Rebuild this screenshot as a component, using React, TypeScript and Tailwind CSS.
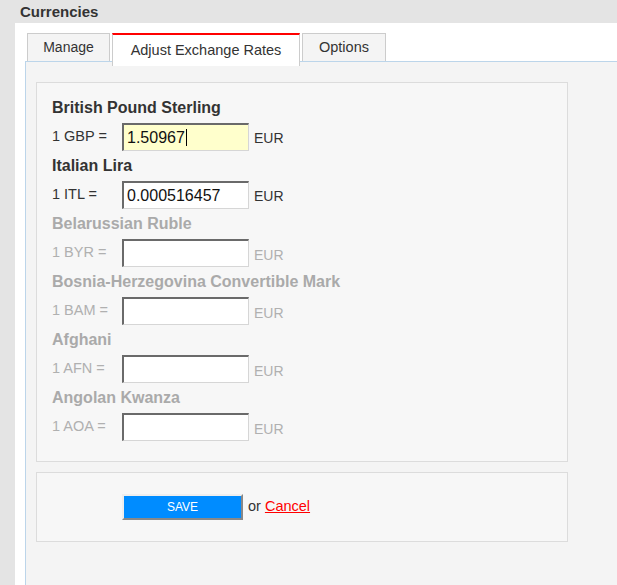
import React from "react";

type Cur = { name: string; code: string; value: string; active: boolean; focused?: boolean };

const currencies: Cur[] = [
  { name: "British Pound Sterling", code: "GBP", value: "1.50967", active: true, focused: true },
  { name: "Italian Lira", code: "ITL", value: "0.000516457", active: true },
  { name: "Belarussian Ruble", code: "BYR", value: "", active: false },
  { name: "Bosnia-Herzegovina Convertible Mark", code: "BAM", value: "", active: false },
  { name: "Afghani", code: "AFN", value: "", active: false },
  { name: "Angolan Kwanza", code: "AOA", value: "", active: false },
];

function CurrencyBlock({ c, last }: { c: Cur; last: boolean }) {
  return (
    <div className={last ? "" : "mb-[4px]"}>
      <div
        className={`h-[20px] leading-[22px] text-[16px] font-bold ${
          c.active ? "text-[#333333]" : "text-[#aaaaaa]"
        }`}
      >
        {c.name}
      </div>
      <div className="mt-[6px] h-[28px] flex items-center">
        <div
          className={`w-[70px] text-[14.5px] ${c.active ? "text-[#333333]" : "text-[#b0b0b0]"}`}
        >
          1 {c.code} =
        </div>
        <div
          className={`w-[127px] h-[28px] border-t-2 border-l-2 border-t-[#6a6a6a] border-l-[#6a6a6a] border-b border-r border-b-[#d6d6d6] border-r-[#d6d6d6] ${
            c.focused ? "bg-[#ffffcc]" : "bg-white"
          } flex items-center pl-[3px] text-[16px] text-[#111111]`}
        >
          <span>{c.value}</span>
          {c.focused && <span className="inline-block w-[1px] h-[17px] bg-black ml-[1px]" />}
        </div>
        <div
          className={`ml-[5px] text-[14px] ${
            c.active ? "text-[#333333] mt-[2px]" : "text-[#b0b0b0] mt-[4px]"
          }`}
        >
          EUR
        </div>
      </div>
    </div>
  );
}

export default function App() {
  return (
    <div
      className="w-full h-[585px] overflow-hidden bg-[#e4e4e4] flex flex-col"
      style={{ fontFamily: '"Liberation Sans", Arial, sans-serif' }}
    >
      <div className="h-[23px] pl-[20px] leading-[23px] text-[15px] font-bold text-[#333333] shrink-0">
        Currencies
      </div>
      <div className="ml-[15px] flex-1 bg-white pt-[10px] flex flex-col">
        <div className="flex items-start pl-[12px] h-[28px] shrink-0">
          <div className="w-[83px] h-[28px] border border-b-0 border-[#cccccc] bg-[#f4f4f4] flex items-center justify-center text-[14px] text-[#333333]">
            Manage
          </div>
          <div className="ml-[2px] w-[188px] h-[33px] border-x border-[#cccccc] border-t-2 border-t-[#ff0000] bg-white relative z-10 flex items-center justify-center pt-[1px] text-[14.5px] text-[#333333]">
            Adjust Exchange Rates
          </div>
          <div className="ml-[2px] w-[84px] h-[28px] border border-b-0 border-[#cccccc] bg-[#f4f4f4] flex items-center justify-center text-[14.5px] text-[#333333]">
            Options
          </div>
        </div>
        <div className="ml-[10px] flex-1 border-l border-t border-[#bcd5ea] bg-[#f4f4f4] pl-[10px] pt-[20px]">
          <div className="w-[532px] border border-[#dcdcdc] bg-[#f7f7f7] pl-[15px] pt-[14px] pb-[20px]">
            {currencies.map((c, i) => (
              <CurrencyBlock key={c.code} c={c} last={i === currencies.length - 1} />
            ))}
          </div>
          <div className="mt-[10px] w-[532px] h-[70px] border border-[#dcdcdc] bg-[#f7f7f7] flex items-center pl-[85px]">
            <button className="w-[121px] h-[26px] bg-[#008cff] border-2 border-t-[#eeeeee] border-l-[#eeeeee] border-b-[#888888] border-r-[#888888] text-white text-[12px] flex items-center justify-center">
              SAVE
            </button>
            <span className="ml-[5px] text-[14.5px] text-[#333333]">or</span>
            <span className="ml-[4px] text-[14.5px] text-[#ff0000] underline">Cancel</span>
          </div>
        </div>
      </div>
    </div>
  );
}
